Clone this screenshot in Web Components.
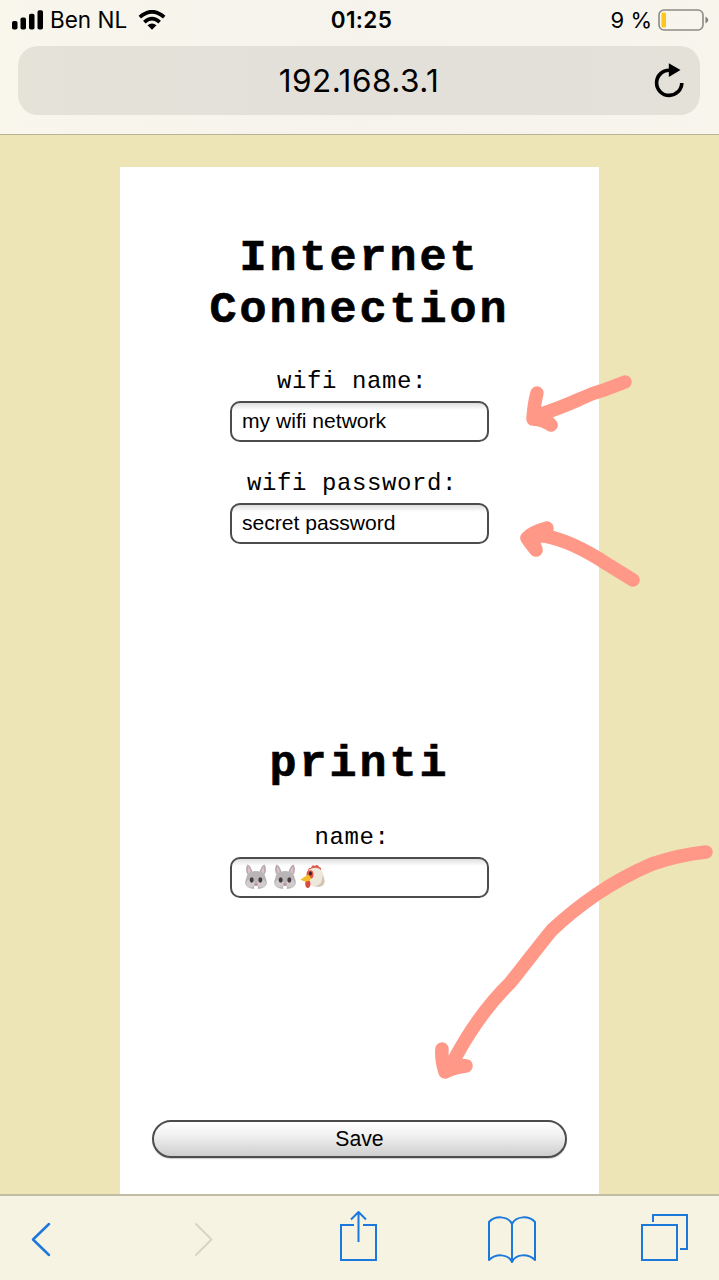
<!DOCTYPE html>
<html lang="en">
<head>
<meta charset="utf-8">
<title>printi setup</title>
<style>
html,body{margin:0;height:100%;overflow:hidden}
body{font-family:"Liberation Sans",Arial,sans-serif;color:#000}
</style>
</head>
<body>
<phone-screen></phone-screen>
<script>
const define = (name, html) => {
  const t = document.createElement('template');
  t.innerHTML = html;
  customElements.define(name, class extends HTMLElement {
    constructor() {
      super();
      this.attachShadow({mode: 'open'}).append(t.content.cloneNode(true));
    }
  });
};

define('status-bar', `
<style>
:host{display:grid;grid-template-columns:1fr auto 1fr;height:40px;align-items:center;padding:0 10px 0 12px;font:22.5px/40px Inter,sans-serif}
.l,.r{display:flex;align-items:center}
.r{justify-content:flex-end}
.pct{font-size:22px}
.time{font-weight:600;font-size:22.5px;letter-spacing:.4px;padding-left:2px}
svg{display:block;flex:none}
.bars{margin-right:6px}.wifi{margin-left:11px}.bat{margin-left:6px}
</style>
<div class="l"><svg class="bars" width="32" height="20" viewBox="0 0 32 20"><rect y="11" width="5.5" height="8.5" rx="1.8"/><rect x="8.5" y="7.5" width="5.5" height="12" rx="1.8"/><rect x="17" y="3.8" width="5.5" height="15.7" rx="1.8"/><rect x="25.5" y=".3" width="5.5" height="19.2" rx="1.8"/></svg><span class="carrier">Ben NL</span><svg class="wifi" width="28" height="20" viewBox="0 0 28 20"><g fill="none" stroke="#000" stroke-width="3.7"><path d="M1.800 7.200Q14-3.700 26.200 7.200"/><path d="M6.300 12.100Q14 5.100 21.700 12.100"/></g><path d="M9.500 15.300Q14 11.500 18.500 15.300L14 19.700Z"/></svg></div>
<div class="time">01:25</div>
<div class="r"><span class="pct">9 %</span><svg class="bat" width="51" height="22" viewBox="0 0 51 22"><rect x="1" y="1" width="44" height="20" rx="5" fill="none" stroke="#8b8a86" stroke-width="1.6"/><rect x="3.5" y="3.5" width="4.5" height="15" rx="1.5" fill="#fbc71f"/><path d="M47.500 7.500Q53 11 47.500 14.500Z" fill="#7b7a76"/></svg></div>`);

define('address-bar', `
<style>
:host{display:grid;grid-template-columns:60px 1fr 60px;align-items:center;height:69px;margin:6px 19px 0 18px;border-radius:20px;background:linear-gradient(90deg,#e5e3d8,#e2e0d9 45%,#e3e1d8)}
.url{text-align:center;font:31.5px/69px Inter,sans-serif;letter-spacing:.5px}
svg{display:block;margin-left:13px}
</style>
<span></span><span class="url"><slot></slot></span>
<svg width="32" height="36" viewBox="0 0 32 36"><path d="M28.800 20A12.600 12.600 0 1 1 16.200 7.200" fill="none" stroke="#000" stroke-width="3.6"/><path d="M15.800 .2V14L27.500 7Z"/></svg>`);

define('section-title', `
<style>
:host{display:block;text-align:center;font:bold 45px/51.5px "Liberation Mono","Courier New",monospace;letter-spacing:3px;-webkit-text-stroke:.7px #000}
</style><slot></slot>`);

define('rabbit-icon', `<style>:host{display:block;width:29px;height:26px}svg{display:block}</style><svg width="29" height="26" viewBox="0 0 29 26"><path d="M5 10Q3 4 5.500 .5Q9.500 2 10.500 9ZM23 10Q25 4 22.500 .5Q18.500 2 17.500 9Z" fill="#b6aaae"/><path d="M6.300 9Q5.300 5 6.200 2.500Q8.800 5 9 9ZM21.700 9Q22.700 5 21.800 2.500Q19.200 5 19 9Z" fill="#dfc2c8"/><path d="M14 7C20 7 23.500 10 23.500 13.500Q25.500 18 24.500 20.500Q22 25 14 25Q6 25 3.500 20.500Q2.500 18 4.500 13.500C4.500 10 8 7 14 7Z" fill="#b9b4b5"/><ellipse cx="8.500" cy="19.500" rx="4.500" ry="4" fill="#d0cccd"/><ellipse cx="19.500" cy="19.500" rx="4.500" ry="4" fill="#d0cccd"/><ellipse cx="9.700" cy="16" rx="2" ry="2.700" fill="#453c42"/><ellipse cx="18.300" cy="16" rx="2" ry="2.700" fill="#453c42"/><rect x="12" y="22" width="4" height="3" rx="1" fill="#fff"/><path d="M11.800 19.500H16.200L14 22Z" fill="#c98390"/></svg>`);

define('chicken-icon', `<style>:host{display:block;width:26px;height:26px}svg{display:block}</style><svg width="26" height="26" viewBox="0 0 26 26"><path d="M8 7Q8.500 3 11 4Q12 0 14.500 2Q18-.5 19 3Q21.500 3 21 6L15 9Z" fill="#df594e"/><path d="M9 5.500Q18 1 22.500 8Q24.500 12 24.500 17Q24 22.500 17 23Q10 23 9.500 18Q7 10 9 5.500Z" fill="#eee7dc"/><path d="M15 22Q23 21 22.500 11Q26 17 23.500 21Q20 24 15 22Z" fill="#d2c6b5"/><ellipse cx="10" cy="10.500" rx="3.500" ry="4.300" fill="#e05245"/><ellipse cx="10.500" cy="9.500" rx="1.500" ry="2" fill="#382425"/><path d="M5.500 17Q10 15 10.500 19Q10.500 24 7.500 24Q4.500 23 5.500 17Z" fill="#db493f"/><path d="M8 10.500L.5 15.500Q5 19 10 16.500L11 14Z" fill="#f4bd29"/></svg>`);

define('form-field', `
<style>
:host{display:flex;flex-direction:column;align-items:center}
.label{font:24px/28px "Liberation Mono","Courier New",monospace;letter-spacing:.6px;padding-right:15px;height:28px}
.box{box-sizing:border-box;display:flex;align-items:center;width:259px;height:41px;margin-top:5px;padding:0 10px 1px;border:2px solid #4c4c4c;border-radius:10px;background:linear-gradient(#dedede,#fff 7px);font-size:21.1px;white-space:nowrap}
</style>
<div class="label"><slot name="label"></slot></div>
<div class="box"><slot></slot></div>`);

define('save-button', `
<style>
:host{box-sizing:border-box;display:flex;align-items:center;justify-content:center;width:415px;height:38px;padding-bottom:1px;border:2px solid #4c4c4c;border-radius:20px;background:linear-gradient(#fff,#f3f3f3 35%,#cecece);box-shadow:0 1px 1px #ccc;font-size:21.2px}
</style><slot></slot>`);

define('setup-card', `
<style>
:host{box-sizing:border-box;display:flex;flex-direction:column;align-items:center;width:479px;height:1027px;margin-left:120px;padding-top:66px;background:#fff}
.wifi{margin-top:32px}.pass{margin-top:28px}.printi{margin-top:195px}.name{margin-top:33.5px}
save-button{margin-top:222px}
</style>
<section-title>Internet<br>Connection</section-title>
<form-field class="wifi"><span slot="label">wifi name:</span>my wifi network</form-field>
<form-field class="pass"><span slot="label">wifi password:</span>secret password</form-field>
<section-title class="printi">printi</section-title>
<form-field class="name"><span slot="label">name:</span><rabbit-icon></rabbit-icon><rabbit-icon></rabbit-icon><chicken-icon></chicken-icon></form-field>
<save-button>Save</save-button>`);

define('tool-bar', `
<style>
:host{box-sizing:border-box;display:grid;grid-template-columns:162px 146px 147px 154px 49px;align-items:start;height:86px;padding:15px 29px 0 31px;border-top:2px solid #c3bca5;background:#f7f3e3}
svg{display:block;fill:none;stroke:#1c79dc;stroke-width:2}
.chev{stroke-linecap:round;stroke-linejoin:round;stroke-width:2.5}.next{stroke:#d8d5c8;stroke-width:2}
</style>
<svg class="chev" width="20" height="54" viewBox="0 0 20 54"><path d="M18 13L2 28.500L18 44"/></svg>
<svg class="chev next" width="20" height="54" viewBox="0 0 20 54"><path d="M3 13L18.500 28.500L3 44"/></svg>
<svg width="40" height="54" viewBox="0 0 40 54"><path d="M15 14H2V49H37V14H24M19.500 31V1M12 8.500L19.500 1L27 8.500"/></svg>
<svg width="50" height="54" viewBox="0 0 50 54"><path stroke-linejoin="round" d="M26 51V13C22 4.500 9 4.500 3 11V49C10 42.500 22 42.500 26 51C30 42.500 42 42.500 49 49V11C43 4.500 30 4.500 26 13"/></svg>
<svg width="49" height="54" viewBox="0 0 49 54"><path d="M2 14H37V49H2ZM13 11V4H47V38H40"/></svg>`);

define('hand-arrows', `
<style>:host{position:absolute;inset:0;pointer-events:none}svg{display:block}</style>
<svg width="719" height="1280" viewBox="0 0 719 1280" fill="none" stroke="#ff9886" stroke-width="13.5" stroke-linecap="round" stroke-linejoin="round"><path d="M625 382L604 390Q592 393 580 399Q560 408 536 416M537 393Q534 404 533 419Q544 420 551 425L540 414"/><path d="M633 580L607 564Q572 541 545 536Q536 535 527 538M547 528Q532 532 527 538Q530 543 536 550L532 538L547 530"/><path d="M706 852Q678 855 652 864Q622 877 597 894Q572 911 552 930C537 948 524 966 510 983Q480 1012 455 1058L445 1071M442 1049Q441 1059 445 1072Q455 1067 466 1066L448 1064"/></svg>`);

define('phone-screen', `
<style>
:host{position:relative;display:flex;flex-direction:column;width:719px;height:1280px;overflow:hidden;background:#ede5b6}
header{box-sizing:border-box;height:135px;border-bottom:1.5px solid #b8b296;background:linear-gradient(90deg,#f9f6ec,#f5f3ec 50%,#f8f5ed)}
main{height:1027px;padding-top:32px}
</style>
<header><status-bar></status-bar><address-bar>192.168.3.1</address-bar></header>
<main><setup-card></setup-card></main>
<tool-bar></tool-bar>
<hand-arrows></hand-arrows>`);
</script>
</body>
</html>
